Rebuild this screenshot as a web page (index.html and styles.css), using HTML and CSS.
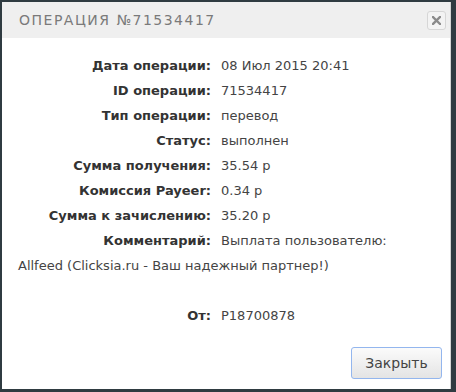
FILE: index.html
```html
<!DOCTYPE html>
<html lang="ru">
<head>
  <meta charset="UTF-8">
  <meta name="viewport" content="width=device-width, initial-scale=1.0">
  <title>Операция</title>
  <link rel="stylesheet" href="styles.css">
</head>
<body>
  <div class="dialog">
    <div class="dialog-head">
      <span class="dialog-title">Операция №71534417</span>
      <button class="dialog-close" title="Закрыть">
        <svg width="9" height="9" viewBox="0 0 9 9"><path d="M1 1L8 8M8 1L1 8" stroke="#8a8a8a" stroke-width="2.4" stroke-linecap="square"/></svg>
      </button>
    </div>

    <div class="dialog-body">
      <div class="row"><span class="lbl">Дата операции:</span>08 Июл 2015 20:41</div>
      <div class="row"><span class="lbl">ID операции:</span>71534417</div>
      <div class="row"><span class="lbl">Тип операции:</span>перевод</div>
      <div class="row"><span class="lbl">Статус:</span>выполнен</div>
      <div class="row"><span class="lbl">Сумма получения:</span>35.54 р</div>
      <div class="row"><span class="lbl">Комиссия Payeer:</span>0.34 р</div>
      <div class="row"><span class="lbl">Сумма к зачислению:</span>35.20 р</div>
      <div class="row"><span class="lbl">Комментарий:</span>Выплата пользователю:</div>
      <div class="row">Allfeed (Clicksia.ru - Ваш надежный партнер!)</div>
      <div class="row row-from"><span class="lbl">От:</span>P18700878</div>
    </div>

    <div class="dialog-foot">
      <button class="btn">Закрыть</button>
    </div>
  </div>
</body>
</html>
```

FILE: styles.css
```css
html, body {
  height: 100%;
}
body {
  margin: 0;
  padding: 2px 5px 3px 2px;
  box-sizing: border-box;
  background-color: #2f3b41;
  font-family: "DejaVu Sans", sans-serif;
}
.dialog {
  height: 100%;
  background-color: #ffffff;
  border-right: 1px solid #d4d4d4;
  display: flex;
  flex-direction: column;
}
.dialog-head {
  height: 36px;
  background-color: #efefef;
  display: flex;
  align-items: center;
  justify-content: space-between;
  padding: 0 4px 0 17px;
}
.dialog-title {
  text-transform: uppercase;
  letter-spacing: 1.5px;
  font-size: 14px;
  color: #7a7a7a;
}
.dialog-close {
  width: 19px;
  height: 19px;
  padding: 0;
  border: 1px solid #d6d6d6;
  border-radius: 3px;
  background-color: #f3f3f3;
  display: flex;
  align-items: center;
  justify-content: center;
  cursor: pointer;
}
.dialog-body {
  flex: 1;
  padding: 15px 18px 0 16px;
  font-size: 13px;
  line-height: 25px;
  color: #444444;
}
.lbl {
  display: inline-block;
  width: 193px;
  margin-right: 10px;
  text-align: right;
  font-weight: bold;
  color: #333333;
}
.row-from {
  margin-top: 25px;
}
.dialog-foot {
  display: flex;
  justify-content: flex-end;
  padding: 0 8px 10px 0;
}
.btn {
  width: 91px;
  height: 32px;
  border: 1px solid #93b6ee;
  border-radius: 3px;
  background: linear-gradient(#fbfbfb, #e4e4e4);
  font-family: "DejaVu Sans", sans-serif;
  font-size: 14px;
  color: #444444;
  cursor: pointer;
}
```
